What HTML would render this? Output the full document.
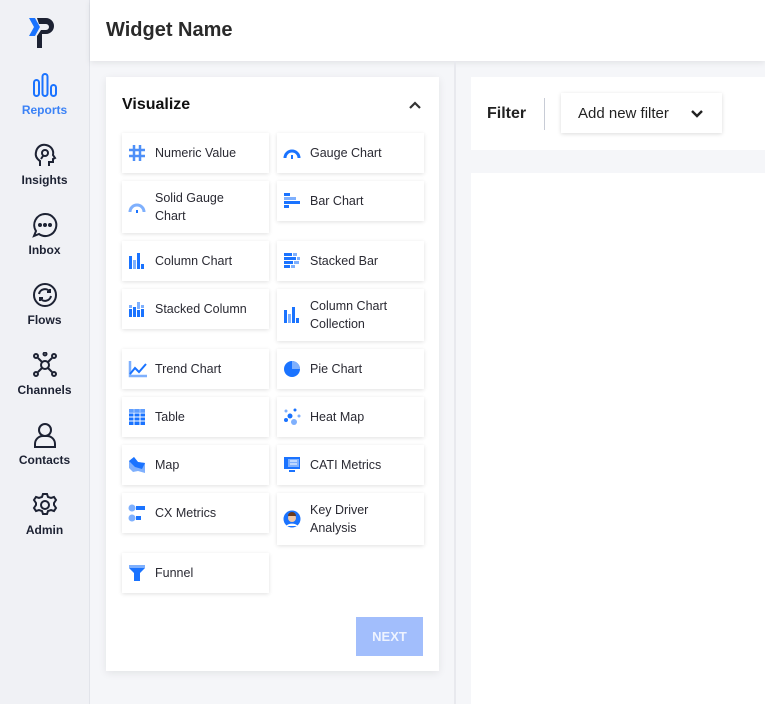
<!DOCTYPE html>
<html><head><style>
*{margin:0;padding:0;box-sizing:border-box}
body{width:765px;height:704px;overflow:hidden;background:#f5f6f9;font-family:"Liberation Sans",sans-serif;position:relative;color:#222}
.side{position:absolute;left:0;top:0;width:90px;height:704px;background:#f0f1f5;border-right:1px solid #e2e4ea}
.nav{position:absolute;left:0;width:89px;text-align:center;font-size:12px;font-weight:bold;color:#1d2233}
.nav svg{display:block;margin:0 auto 5px}
.head{position:absolute;left:90px;top:0;width:675px;height:61px;background:#fff;box-shadow:0 2px 6px rgba(0,0,0,.08)}
.head h1{position:absolute;left:16px;top:19px;font-size:20px;font-weight:bold;color:#2a2a2a}
.panel{position:absolute;left:106px;top:77px;width:333px;height:594px;background:#fff;box-shadow:0 2px 8px rgba(0,0,0,.08)}
.panel h2{position:absolute;left:16px;top:19px;font-size:16px;font-weight:bold;color:#111}
.c{position:absolute;background:#fff;box-shadow:0 1px 4px rgba(0,0,0,.12);width:147px;font-size:12.5px;color:#2a2a33;display:flex;align-items:center;line-height:18px}
.c .i{width:20px;height:18px;margin:0 7px 0 6px;flex:none;position:relative}
.div{position:absolute;left:454px;top:61px;width:2px;height:643px;background:#e8e9ee}
.filt{position:absolute;left:471px;top:77px;width:294px;height:73px;background:#fff}
.chart{position:absolute;left:471px;top:173px;width:294px;height:531px;background:#fff}
.next{position:absolute;left:250px;top:540px;width:67px;height:39px;background:#a2befc;color:#eef3ff;font-size:13px;font-weight:bold;text-align:center;line-height:39px}
</style></head><body>
<div class="side">
<svg style="position:absolute;left:28px;top:16px" width="30" height="34" viewBox="0 0 30 34"><path d="M1 2h6l5 9-5 9H1l5-9z" fill="#1a73ff"/><path d="M9 2h9a8 8 0 0 1 0 16h-4v14H9V20l4-6h5a3 3 0 0 0 0-6h-7z" fill="#1d2233"/></svg>
<div class="nav" style="top:72px;color:#3b82f6"><svg width="26" height="26" viewBox="0 0 26 26" fill="none" stroke="#1a73ff" stroke-width="2"><rect x="2" y="8" width="5" height="16" rx="2.5"/><rect x="10.5" y="2" width="5" height="22" rx="2.5"/><rect x="19" y="13" width="5" height="11" rx="2.5"/></svg>Reports</div>
<div class="nav" style="top:142px"><svg width="26" height="26" viewBox="0 0 26 26" fill="none" stroke="#1d2233" stroke-width="2"><path d="M8 24v-5c-3-2-5-5-4-9 1-5 5-8 10-7 5 1 8 5 7 10l2 3-2 1v3h-4v4"/><circle cx="13" cy="11" r="3"/><path d="M11 14l-2 3"/></svg>Insights</div>
<div class="nav" style="top:212px"><svg width="26" height="26" viewBox="0 0 26 26" fill="none" stroke="#1d2233" stroke-width="2"><path d="M13 2a11 11 0 1 1-6 20l-5 2 2-5A11 11 0 0 1 13 2z"/><circle cx="8" cy="13" r="1" fill="#1d2233"/><circle cx="13" cy="13" r="1" fill="#1d2233"/><circle cx="18" cy="13" r="1" fill="#1d2233"/></svg>Inbox</div>
<div class="nav" style="top:282px"><svg width="26" height="26" viewBox="0 0 26 26" fill="none" stroke="#1d2233" stroke-width="2"><circle cx="13" cy="13" r="11"/><path d="M7 12a6 6 0 0 1 11-2m0-3v3h-3M19 14a6 6 0 0 1-11 2m0 3v-3h3"/></svg>Flows</div>
<div class="nav" style="top:352px"><svg width="26" height="26" viewBox="0 0 26 26" fill="none" stroke="#1d2233" stroke-width="2"><circle cx="13" cy="13" r="4"/><circle cx="4" cy="4" r="2"/><circle cx="22" cy="4" r="2"/><circle cx="4" cy="22" r="2"/><circle cx="22" cy="22" r="2"/><circle cx="13" cy="2" r="1.5"/><path d="M6 6l4 4M20 6l-4 4M6 20l4-4M20 20l-4-4"/></svg>Channels</div>
<div class="nav" style="top:422px"><svg width="26" height="26" viewBox="0 0 26 26" fill="none" stroke="#1d2233" stroke-width="2"><circle cx="13" cy="8" r="6"/><path d="M3 25v-3a8 8 0 0 1 8-8h4a8 8 0 0 1 8 8v3z"/></svg>Contacts</div>
<div class="nav" style="top:492px"><svg width="26" height="26" viewBox="0 0 26 26" fill="none" stroke="#1d2233" stroke-width="2"><path d="M11 2h4l1 3 3 1 3-1 2 3-2 3v2l2 3-2 3-3-1-3 1-1 3h-4l-1-3-3-1-3 1-2-3 2-3v-2L2 8l2-3 3 1 3-1z"/><circle cx="13" cy="13" r="4"/></svg>Admin</div>
</div>
<div class="head"><h1>Widget Name</h1></div>
<div class="div"></div>
<div class="panel"><h2>Visualize</h2>
<svg style="position:absolute;left:303px;top:24px" width="12" height="8" viewBox="0 0 12 8"><path d="M1 7l5-5 5 5" fill="none" stroke="#333" stroke-width="2.2"/></svg>
<div class="c" style="left:16px;top:56px;height:40px"><div class="i"><svg width="18" height="18" viewBox="0 0 18 18" stroke="#4d8ff8" stroke-width="2.5"><path d="M6 1v16M12 1v16M1 6h16M1 12h16"/></svg></div>Numeric Value</div>
<div class="c" style="left:171px;top:56px;height:40px"><div class="i"><svg width="18" height="18" viewBox="0 0 18 18"><path d="M2 14a7 7 0 0 1 14 0" fill="none" stroke="#1a73ff" stroke-width="3"/><path d="M9 11v4" stroke="#1a73ff" stroke-width="2"/></svg></div>Gauge Chart</div>
<div class="c" style="left:16px;top:104px;height:52px"><div class="i"><svg width="18" height="18" viewBox="0 0 18 18"><path d="M2 14a7 7 0 0 1 14 0" fill="none" stroke="#7fb0fd" stroke-width="3"/><path d="M9 12v3" stroke="#1a73ff" stroke-width="2"/></svg></div>Solid Gauge<br>Chart</div>
<div class="c" style="left:171px;top:104px;height:40px"><div class="i"><svg width="18" height="18" viewBox="0 0 18 18"><rect x="1" y="1" width="6" height="3" fill="#1a73ff"/><rect x="1" y="5" width="12" height="3" fill="#7fb0fd"/><rect x="1" y="9" width="16" height="3" fill="#1a73ff"/><rect x="1" y="13" width="5" height="3" fill="#1a73ff"/></svg></div>Bar Chart</div>
<div class="c" style="left:16px;top:164px;height:40px"><div class="i"><svg width="18" height="18" viewBox="0 0 18 18"><rect x="1" y="4" width="3" height="13" fill="#1a73ff"/><rect x="5" y="8" width="3" height="9" fill="#7fb0fd"/><rect x="9" y="1" width="3" height="16" fill="#1a73ff"/><rect x="13" y="12" width="3" height="5" fill="#1a73ff"/></svg></div>Column Chart</div>
<div class="c" style="left:171px;top:164px;height:40px"><div class="i"><svg width="18" height="18" viewBox="0 0 18 18"><rect x="1" y="1" width="8" height="3" fill="#1a73ff"/><rect x="10" y="1" width="4" height="3" fill="#7fb0fd"/><rect x="1" y="5" width="12" height="3" fill="#1a73ff"/><rect x="14" y="5" width="3" height="3" fill="#7fb0fd"/><rect x="1" y="9" width="9" height="3" fill="#1a73ff"/><rect x="11" y="9" width="5" height="3" fill="#7fb0fd"/><rect x="1" y="13" width="6" height="3" fill="#1a73ff"/><rect x="8" y="13" width="4" height="3" fill="#7fb0fd"/></svg></div>Stacked Bar</div>
<div class="c" style="left:16px;top:212px;height:40px"><div class="i"><svg width="18" height="18" viewBox="0 0 18 18"><rect x="1" y="9" width="3" height="8" fill="#1a73ff"/><rect x="1" y="5" width="3" height="3" fill="#7fb0fd"/><rect x="5" y="7" width="3" height="10" fill="#1a73ff"/><rect x="9" y="10" width="3" height="7" fill="#1a73ff"/><rect x="9" y="2" width="3" height="7" fill="#7fb0fd"/><rect x="13" y="9" width="3" height="8" fill="#1a73ff"/><rect x="13" y="5" width="3" height="3" fill="#7fb0fd"/></svg></div>Stacked Column</div>
<div class="c" style="left:171px;top:212px;height:52px"><div class="i"><svg width="18" height="18" viewBox="0 0 18 18"><rect x="1" y="4" width="3" height="13" fill="#1a73ff"/><rect x="5" y="8" width="3" height="9" fill="#7fb0fd"/><rect x="9" y="1" width="3" height="16" fill="#1a73ff"/><rect x="13" y="12" width="3" height="5" fill="#1a73ff"/></svg></div>Column Chart<br>Collection</div>
<div class="c" style="left:16px;top:272px;height:40px"><div class="i"><svg width="20" height="18" viewBox="0 0 20 18" fill="none"><path d="M2 1v15h17" stroke="#7fb0fd" stroke-width="2.5"/><path d="M2 14l5-6 4 4 7-8" stroke="#1a73ff" stroke-width="2"/></svg></div>Trend Chart</div>
<div class="c" style="left:171px;top:272px;height:40px"><div class="i"><svg width="18" height="18" viewBox="0 0 18 18"><circle cx="9" cy="9" r="8" fill="#1a73ff"/><path d="M9 9V1a8 8 0 0 1 8 8z" fill="#7fb0fd"/></svg></div>Pie Chart</div>
<div class="c" style="left:16px;top:320px;height:40px"><div class="i"><svg width="18" height="18" viewBox="0 0 18 18"><rect x="1" y="1" width="16" height="16" fill="#1a73ff"/><path d="M6 1v16M12 1v16M1 5h16M1 9h16M1 13h16" stroke="#fff" stroke-width="1"/><rect x="1" y="1" width="16" height="4" fill="#7fb0fd" opacity=".7"/></svg></div>Table</div>
<div class="c" style="left:171px;top:320px;height:40px"><div class="i"><svg width="18" height="18" viewBox="0 0 18 18"><circle cx="3" cy="3" r="1.5" fill="#7fb0fd"/><circle cx="12" cy="2" r="1.5" fill="#1a73ff"/><circle cx="7" cy="8" r="2.5" fill="#1a73ff"/><circle cx="16" cy="8" r="1.5" fill="#7fb0fd"/><circle cx="3" cy="12" r="2" fill="#1a73ff"/><circle cx="11" cy="14" r="3" fill="#7fb0fd"/></svg></div>Heat Map</div>
<div class="c" style="left:16px;top:368px;height:40px"><div class="i"><svg width="18" height="18" viewBox="0 0 18 18"><path d="M1 5l5-4 4 5 7 1v10l-7-2-5 1-4-4z" fill="#7fb0fd"/><path d="M1 5l5-4 4 5 7 1-3 6-7-2z" fill="#1a73ff"/></svg></div>Map</div>
<div class="c" style="left:171px;top:368px;height:40px"><div class="i"><svg width="18" height="18" viewBox="0 0 18 18"><rect x="1" y="1" width="16" height="12" fill="#1a73ff"/><rect x="5" y="3" width="11" height="8" fill="#7fb0fd"/><path d="M7 5h7M7 8h7" stroke="#fff"/><rect x="6" y="14" width="6" height="2" fill="#1a73ff"/></svg></div>CATI Metrics</div>
<div class="c" style="left:16px;top:416px;height:40px"><div class="i"><svg width="18" height="18" viewBox="0 0 18 18"><circle cx="4" cy="4" r="3.5" fill="#7fb0fd"/><circle cx="4" cy="14" r="3.5" fill="#7fb0fd"/><rect x="8" y="2" width="9" height="4" fill="#1a73ff"/><rect x="8" y="12" width="5" height="4" fill="#1a73ff"/></svg></div>CX Metrics</div>
<div class="c" style="left:171px;top:416px;height:52px"><div class="i"><svg width="18" height="18" viewBox="0 0 18 18"><circle cx="9" cy="9" r="8.5" fill="#1a73ff"/><circle cx="9" cy="8" r="4" fill="#f0c8a8"/><path d="M5 6a4 4 0 0 1 8 0z" fill="#6b3b1f"/><path d="M3 16a7 5 0 0 1 12 0z" fill="#fff"/></svg></div>Key Driver<br>Analysis</div>
<div class="c" style="left:16px;top:476px;height:40px"><div class="i"><svg width="18" height="18" viewBox="0 0 18 18"><path d="M1 1h16v3l-5 5v8H6V9L1 4z" fill="#1a73ff"/><rect x="1" y="1" width="16" height="3" fill="#7fb0fd"/></svg></div>Funnel</div>
<div class="next">NEXT</div>
</div>
<div class="filt">
<div style="position:absolute;left:16px;top:28px;font-size:16px;font-weight:bold;color:#222">Filter</div>
<div style="position:absolute;left:73px;top:21px;width:1px;height:32px;background:#c8ccd6"></div>
<div style="position:absolute;left:90px;top:16px;width:161px;height:40px;background:#fff;box-shadow:0 1px 4px rgba(0,0,0,.14)">
<span style="position:absolute;left:17px;top:12px;font-size:15px;color:#222">Add new filter</span>
<svg style="position:absolute;left:130px;top:17px" width="12" height="8" viewBox="0 0 12 8"><path d="M1 1l5 5 5-5" fill="none" stroke="#222" stroke-width="2.4"/></svg>
</div></div>
<div class="chart"></div>
</body></html>
